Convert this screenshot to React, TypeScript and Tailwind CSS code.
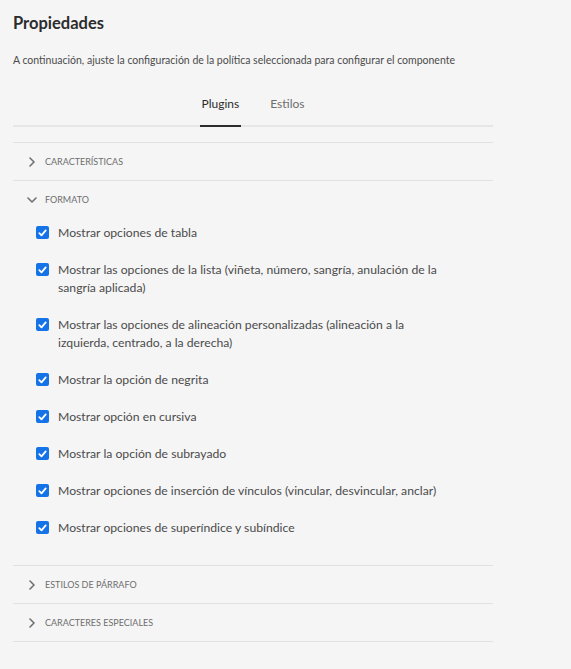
import { useState } from "react";

const FONT = "font-['Lato','Liberation_Sans',sans-serif]";

const options = [
  "Mostrar opciones de tabla",
  "Mostrar las opciones de la lista (viñeta, número, sangría, anulación de la sangría aplicada)",
  "Mostrar las opciones de alineación personalizadas (alineación a la izquierda, centrado, a la derecha)",
  "Mostrar la opción de negrita",
  "Mostrar opción en cursiva",
  "Mostrar la opción de subrayado",
  "Mostrar opciones de inserción de vínculos (vincular, desvincular, anclar)",
  "Mostrar opciones de superíndice y subíndice",
];

function Chevron({ open }: { open: boolean }) {
  return (
    <span className="flex w-[10px] justify-center">
      {open ? (
        <svg width="10" height="6" viewBox="0 0 10 6">
          <path d="M1 1l4 4 4-4" fill="none" stroke="#707070" strokeWidth="1.6" strokeLinecap="round" strokeLinejoin="round" />
        </svg>
      ) : (
        <svg width="6" height="10" viewBox="0 0 6 10">
          <path d="M1 1l4 4-4 4" fill="none" stroke="#707070" strokeWidth="1.6" strokeLinecap="round" strokeLinejoin="round" />
        </svg>
      )}
    </span>
  );
}

function Checkbox() {
  return (
    <span className="mt-[2px] flex h-[13px] w-[13px] shrink-0 items-center justify-center rounded-[2px] bg-[#1473e6]">
      <svg width="9" height="8" viewBox="0 0 9 8">
        <path d="M1.3 4.2l2.2 2.2 4.2-5" fill="none" stroke="white" strokeWidth="1.8" strokeLinecap="round" strokeLinejoin="round" />
      </svg>
    </span>
  );
}

function SectionHeader({ label, open }: { label: string; open: boolean }) {
  return (
    <div className="flex h-[37px] items-center gap-[8px] pl-[14px]">
      <Chevron open={open} />
      <span className="text-[9px] uppercase text-[#6e6e6e]">{label}</span>
    </div>
  );
}

export default function App() {
  const [tab, setTab] = useState("Plugins");

  return (
    <div className={`min-h-[669px] bg-[#f5f5f5] px-[13px] pt-[12px] ${FONT}`}>
      <h1 className="text-[16.5px] font-bold leading-[22px] text-[#2c2c2c]">Propiedades</h1>
      <p className="mt-[18px] text-[10.5px] leading-[16px] text-[#4b4b4b]">
        A continuación, ajuste la configuración de la política seleccionada para configurar el componente
      </p>

      <div className="w-[480px]">
        <div className="mt-[20px] flex justify-center gap-[27px] border-b-2 border-[#e6e6e6]">
          {["Plugins", "Estilos"].map((t) => (
            <button
              key={t}
              onClick={() => setTab(t)}
              className={`-mb-[2px] border-b-2 px-[2px] pb-[13px] pt-[8px] text-[12px] leading-[16px] ${
                tab === t ? "border-[#2c2c2c] text-[#2c2c2c]" : "border-transparent text-[#6e6e6e]"
              }`}
            >
              {t}
            </button>
          ))}
        </div>

        <div className="mt-[15px] border-t border-[#e1e1e1]">
          <div className="border-b border-[#e1e1e1]">
            <SectionHeader label="Características" open={false} />
          </div>
          <div className="border-b border-[#e1e1e1]">
            <SectionHeader label="Formato" open={true} />
            <ul className="flex flex-col gap-[19px] pb-[28px] pl-[23px] pt-[6px]">
              {options.map((o) => (
                <li key={o} className="flex items-start gap-[9px]">
                  <Checkbox />
                  <span className="w-[395px] text-[12.2px] leading-[18px] text-[#4b4b4b]">{o}</span>
                </li>
              ))}
            </ul>
          </div>
          <div className="border-b border-[#e1e1e1]">
            <SectionHeader label="Estilos de párrafo" open={false} />
          </div>
          <div className="border-b border-[#e1e1e1]">
            <SectionHeader label="Caracteres especiales" open={false} />
          </div>
        </div>
      </div>
    </div>
  );
}
